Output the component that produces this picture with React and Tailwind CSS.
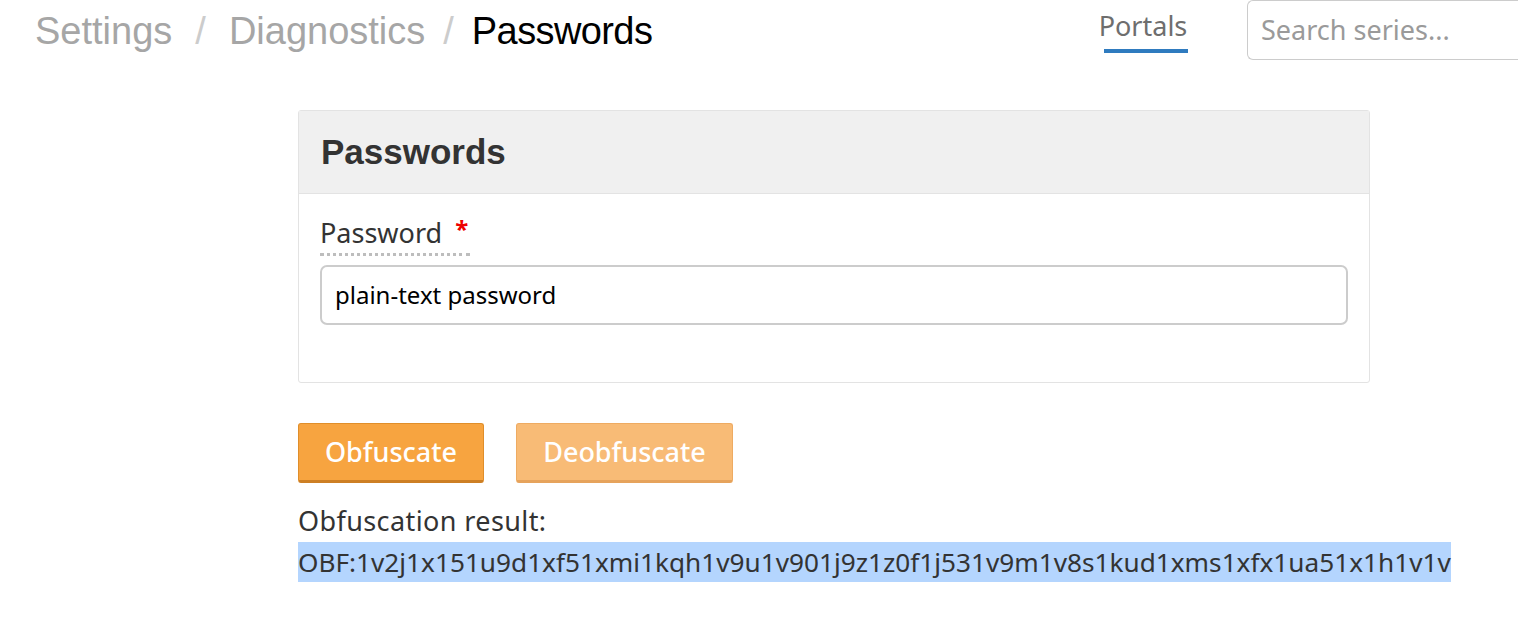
import React from 'react';

const body = { fontFamily: '"Noto Sans", "Open Sans", sans-serif' };

const Breadcrumb = () => (
  <div className="flex items-baseline text-[38px] leading-none pt-[12px] font-['Liberation_Sans',Arial,sans-serif]">
    <span className="text-[#a6a6a6]">Settings</span>
    <span className="text-[#cccccc] mx-[23px]">/</span>
    <span className="text-[#a6a6a6]">Diagnostics</span>
    <span className="text-[#cccccc] mx-[18px]">/</span>
    <span className="text-black tracking-[-0.6px]">Passwords</span>
  </div>
);

const App = () => {
  return (
    <div className="w-[1518px] h-[642px] overflow-hidden bg-white relative" style={body}>
      <div className="flex items-start h-[60px]">
        <div className="pl-[35px] flex-1">
          <Breadcrumb />
        </div>
        <div className="flex flex-col items-center mr-[59px] pt-[9px]">
          <span className="text-[27px] leading-[34px] text-[#6e6e6e]">Portals</span>
          <span className="block w-[84px] h-[4px] bg-[#2f7bbf] ml-[6px] mt-[6px]"></span>
        </div>
        <div className="w-[271px] h-[60px] shrink-0 border border-r-0 border-[#cccccc] rounded-l-[6px] flex items-center pl-[13px]">
          <span className="text-[27px] text-[#9a9a9a] whitespace-nowrap">Search series...</span>
        </div>
      </div>

      <div className="pl-[298px] pt-[50px]">
        <div className="w-[1072px] border border-[#e3e3e3] rounded-[3px]">
          <div className="h-[83px] bg-[#f0f0f0] border-b border-[#e3e3e3] flex items-center px-[22px]">
            <h2 className="text-[35px] font-bold text-[#333333] font-['Liberation_Sans',Arial,sans-serif]">Passwords</h2>
          </div>
          <div className="px-[21px] pt-[23px] pb-[57px]">
            <div className="inline-flex items-start border-b-[3px] border-dotted border-[#bdbdbd] pb-[4px]">
              <span className="text-[27px] leading-[32px] text-[#333333]">Password</span>
              <span className="text-[24px] leading-[24px] text-[#ee0000] font-bold ml-[13px] mr-[2px]">*</span>
            </div>
            <div className="mt-[9px] h-[60px] border-2 border-[#cccccc] rounded-[7px] flex items-center px-[13px]">
              <span className="text-[24px] text-black">plain-text password</span>
            </div>
          </div>
        </div>

        <div className="flex gap-[32px] mt-[40px]">
          <button className="h-[60px] w-[186px] rounded-[3px] bg-[#f7a440] border border-[#e08e2a] border-b-[3px] border-b-[#cd7f24] text-white text-[27px] font-medium">
            Obfuscate
          </button>
          <button className="h-[60px] w-[217px] rounded-[3px] bg-[#f8bb76] border border-[#eeab62] border-b-[3px] border-b-[#e6a35c] text-white text-[27px] font-medium">
            Deobfuscate
          </button>
        </div>

        <div className="mt-[21px] text-[27px] leading-[33px] tracking-[0.4px] text-[#333333]">Obfuscation result:</div>
        <div className="mt-[5px] inline-block bg-[#b4d5fe] text-[26.2px] leading-[40px] text-[#333333]">
          OBF:1v2j1x151u9d1xf51xmi1kqh1v9u1v901j9z1z0f1j531v9m1v8s1kud1xms1xfx1ua51x1h1v1v
        </div>
      </div>
    </div>
  );
};

export default App;
